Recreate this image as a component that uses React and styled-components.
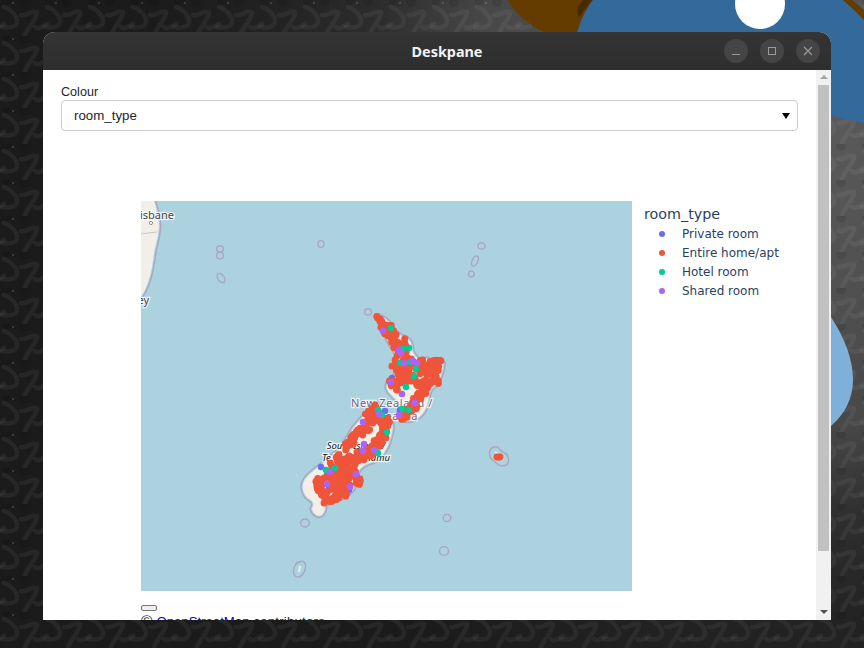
import React from 'react'
import styled, { createGlobalStyle } from 'styled-components'

const GlobalStyle = createGlobalStyle`
  html, body { margin: 0; padding: 0; background: #1c1c1c; }
  body { font-family: "Liberation Sans", Arial, sans-serif; }
`

const Desktop = styled.div`
  position: relative;
  box-sizing: border-box;
  width: 864px;
  height: 648px;
  padding: 32px 33px 28px 43px;
  overflow: hidden;
`
const Wallpaper = styled.svg`
  position: absolute;
  left: 0;
  top: 0;
`
const Window = styled.div`
  position: relative;
  display: flex;
  flex-direction: column;
  height: 100%;
  border-radius: 12px 12px 0 0;
  overflow: hidden;
  background: #fff;
`
const TitleBar = styled.div`
  display: grid;
  grid-template-columns: 1fr auto 1fr;
  align-items: center;
  flex: none;
  height: 38px;
  padding-left: 20px;
  background: linear-gradient(#343434, #2e2e2e);
`
const Title = styled.div`
  font-family: "Noto Sans", "Open Sans", sans-serif;
  font-weight: 700;
  font-size: 14.4px;
  color: #f2f2f2;
`
const Controls = styled.div`
  display: flex;
  justify-content: flex-end;
  gap: 12px;
  margin-right: 11px;
`
const ControlButton = styled.div`
  display: flex;
  align-items: center;
  justify-content: center;
  width: 24px;
  height: 24px;
  border-radius: 50%;
  background: #454545;
`
const Body = styled.div`
  display: flex;
  flex: 1;
  min-height: 0;
`
const Content = styled.div`
  flex: 1;
  min-width: 0;
  padding: 13px 18px 0;
  overflow: hidden;
`
const Label = styled.label`
  display: block;
  padding-top: 1px;
  font-size: 12.6px;
  line-height: 16px;
  color: #212529;
`
const SelectWrap = styled.div`
  position: relative;
  height: 31px;
`
const Select = styled.select`
  appearance: none;
  box-sizing: border-box;
  display: block;
  width: 100%;
  height: 100%;
  padding: 0 12px;
  border: 1px solid #cbcbcb;
  border-radius: 4px;
  background: #fff;
  font-family: "Liberation Sans", Arial, sans-serif;
  font-size: 13.3px;
  color: #212529;
`
const SelectArrow = styled.span`
  position: absolute;
  right: 8px;
  top: 13px;
  width: 0;
  height: 0;
  border-left: 4px solid transparent;
  border-right: 4px solid transparent;
  border-top: 6px solid #000;
`
const PlotRow = styled.div`
  display: flex;
  margin-top: 70px;
  padding-left: 80px;
`
const MapSvg = styled.svg`
  display: block;
  flex: none;
`
const Legend = styled.div`
  margin-left: 12px;
  padding-top: 4px;
  font-family: "DejaVu Sans", Verdana, sans-serif;
  color: #2a3f5f;
`
const LegendTitle = styled.div`
  font-size: 14.3px;
  line-height: 18px;
  margin-bottom: 1px;
`
const LegendRow = styled.div`
  display: flex;
  align-items: center;
  height: 19px;
  font-size: 12px;
  white-space: nowrap;
`
const LegendDot = styled.span`
  width: 6px;
  height: 6px;
  margin: 0 17px 0 15px;
  border-radius: 50%;
  background: ${p => p.$color};
`
const MapFoot = styled.div`
  margin-top: 14px;
  margin-left: 80px;
  font-size: 13.2px;
  line-height: 16px;
  color: #212529;
  white-space: nowrap;
`
const ResetButton = styled.button`
  display: block;
  box-sizing: border-box;
  width: 16px;
  height: 6px;
  padding: 0;
  margin-bottom: 2px;
  border: 1px solid #767676;
  border-radius: 2px;
  background: #efefef;
`
const Copyright = styled.span`
  font-size: 15.5px;
  line-height: 1;
  margin-right: 4px;
`
const OsmLink = styled.a`
  color: #0000ee;
  text-decoration: underline;
`
const Contributors = styled.span`
  letter-spacing: 0.25px;
`
const Scrollbar = styled.div`
  display: flex;
  flex-direction: column;
  align-items: center;
  flex: none;
  width: 15px;
  background: #f1f1f1;
`
const ScrollArrow = styled.div`
  flex: none;
  width: 0;
  height: 0;
  border-left: 4px solid transparent;
  border-right: 4px solid transparent;
  ${p => p.$down
    ? `border-top: 4px solid #505050; margin: auto 0 6px;`
    : `border-bottom: 4px solid #a3a3a3; margin-top: 5px;`}
`
const ScrollThumb = styled.div`
  flex: none;
  width: 11px;
  height: 466px;
  margin-top: 6px;
  background: #c1c1c1;
`

// smoothing for a closed shape, curves through the midpoints
const smooth = pts => {
  const mid = (a, b) => [(a[0] + b[0]) / 2, (a[1] + b[1]) / 2]
  const start = mid(pts[pts.length - 1], pts[0])
  let d = `M${start[0]} ${start[1]}`
  pts.forEach((p, i) => {
    const m = mid(p, pts[(i + 1) % pts.length])
    d += `Q${p[0]} ${p[1]} ${m[0]} ${m[1]}`
  })
  return d + 'Z'
}

const northIsland = [
  [376, 313], [382, 315], [390, 320], [398, 333], [409, 337], [413, 342], [414, 353], [422, 360],
  [427, 356], [432, 360], [437, 358], [445, 360], [445, 368], [442, 378], [437, 387], [431, 391],
  [430, 403], [424, 416], [414, 422], [404, 423], [399, 417], [403, 409], [394, 400], [385, 391],
  [385, 382], [395, 374], [396, 356], [389, 346], [382, 333], [377, 322],
]
const southIsland = [
  [366, 411], [376, 409], [389, 414], [395, 424], [393, 436], [389, 448], [381, 461], [365, 466],
  [358, 474], [358, 485], [351, 495], [337, 503], [326, 505], [327, 510], [323, 517], [316, 518],
  [309, 510], [313, 503], [305, 499], [300, 488], [303, 478], [315, 467], [329, 457], [343, 443],
  [351, 427],
]
const australia = [
  [154, 195], [158, 208], [161, 222], [160, 236], [156, 250], [154, 268], [149, 286], [142, 299],
  [130, 312], [130, 195],
]
const islands = [
  { cx: 368, cy: 312, rx: 3.6, ry: 3.2 },
  { cx: 321, cy: 244, rx: 3, ry: 3.4 },
  { cx: 220, cy: 249, rx: 3.4, ry: 3.2 },
  { cx: 220, cy: 255.5, rx: 3.4, ry: 3.4 },
  { cx: 221, cy: 278, rx: 3.2, ry: 5.2, rotate: -35 },
  { cx: 481.5, cy: 246, rx: 3.6, ry: 3.2 },
  { cx: 475, cy: 261, rx: 2.8, ry: 5.4, rotate: 25 },
  { cx: 471.3, cy: 274, rx: 2.9, ry: 2.9 },
  { cx: 305, cy: 523, rx: 4.4, ry: 4 },
  { cx: 447, cy: 518, rx: 3.8, ry: 3.6 },
  { cx: 444, cy: 551, rx: 4.6, ry: 4.4 },
]
const chatham = [[490, 448], [498, 446], [500, 451], [508, 454], [509, 464], [501, 467], [495, 462], [489, 457]]
const auckland = [[297, 562], [305, 561], [306, 568], [303, 575], [297, 578], [293, 574], [294, 567]]

// [x1, y1, x2, y2, how many, spread]
const redBands = [
  [378, 317, 385, 327, 12, 1.5], [385, 327, 394, 340, 30, 5], [394, 340, 402, 353, 30, 5],
  [406, 339, 405, 352, 8, 1.5], [402, 354, 432, 366, 16, 5], [396, 362, 422, 372, 18, 6],
  [420, 364, 438, 380, 16, 5], [433, 361, 441, 362, 7, 1.5], [437, 365, 439, 370, 3, 1],
  [389, 382, 399, 388, 14, 2.5], [398, 368, 404, 382, 14, 3.5], [408, 376, 420, 386, 12, 3],
  [418, 382, 436, 384, 12, 3], [428, 384, 420, 398, 22, 3.5], [420, 396, 412, 410, 26, 4],
  [413, 405, 402, 418, 18, 3], [375, 406, 372, 416, 8, 2], [370, 414, 388, 424, 24, 5],
  [386, 424, 381, 437, 14, 4], [370, 420, 360, 434, 24, 4], [360, 430, 345, 447, 28, 3],
  [382, 436, 372, 452, 22, 4], [372, 450, 356, 460, 24, 5], [356, 456, 338, 468, 30, 6],
  [340, 460, 348, 478, 30, 6], [350, 470, 358, 484, 18, 3.5], [348, 484, 342, 494, 18, 4],
  [344, 494, 330, 500, 20, 3], [330, 474, 318, 484, 18, 3], [318, 480, 320, 492, 16, 3],
  [322, 490, 326, 498, 12, 3], [334, 484, 332, 490, 8, 4], [324, 503, 323, 503, 1, 0],
  [497, 457, 500, 457, 3, 0], [339, 455, 337, 457, 3, 1], [332, 467, 330, 463, 3, 1],
  [342, 476, 336, 488, 14, 4],
]

const bluePts = [
  [321, 467], [385, 411], [358, 455], [318, 485], [342, 493], [353, 468], [327, 475], [405, 365],
  [392, 378], [400, 410], [380, 417], [336, 497], [412, 403], [349, 490], [329, 488],
]
const greenPts = [
  [391, 328], [403, 349], [409, 348], [400, 363], [410, 362], [416, 369], [414, 376], [406, 387],
  [402, 409], [409, 410], [378, 410], [382, 415], [387, 432], [378, 453], [326, 470], [335, 468],
]
const purplePts = [
  [383, 331], [399, 350], [401, 353], [404, 363], [413, 361], [417, 363], [391, 382], [402, 394],
  [415, 403], [379, 414], [399, 415], [363, 422], [364, 444], [363, 451], [374, 450], [330, 472],
  [356, 474], [350, 487], [327, 484],
]

const makeDots = () => {
  // small seeded generator so that the picture stays the same on each load
  let seed = 20231
  const rand = () => {
    seed = (seed * 1664525 + 1013904223) % 4294967296
    return seed / 4294967296
  }
  const dots = []
  redBands.forEach(([x1, y1, x2, y2, n, spread]) => {
    for (let i = 0; i < n; i++) {
      const t = n === 1 ? 0 : i / (n - 1)
      dots.push([
        x1 + (x2 - x1) * t + (rand() - 0.5) * 2 * spread,
        y1 + (y2 - y1) * t + (rand() - 0.5) * 2 * spread,
      ])
    }
  })
  return dots
}
const redPts = makeDots()

const LEGEND = [
  { name: 'Private room', color: '#636efa' },
  { name: 'Entire home/apt', color: '#ef553b' },
  { name: 'Hotel room', color: '#00cc96' },
  { name: 'Shared room', color: '#ab63fa' },
]

const WATER = '#acd2df'
const LAND = '#f2efe9'
const COAST = '#aaa6bf'

const Dots = ({ pts, color, r }) => (
  <g fill={color}>
    {pts.map((p, i) => <circle key={i} cx={p[0].toFixed(1)} cy={p[1].toFixed(1)} r={r} />)}
  </g>
)

// land with a strip of water inside of the coast line, as the map tiles have it
const Coast = ({ id, pts }) => {
  const d = smooth(pts)
  return (
    <g>
      <clipPath id={id}><path d={d} /></clipPath>
      <path d={d} fill={LAND} stroke={WATER} strokeWidth="3.5" clipPath={`url(#${id})`} />
      <path d={d} fill="none" stroke={COAST} strokeWidth="1.4" />
    </g>
  )
}

const MapLabel = ({ x, y, size, fill, italic, spacing, anchor = 'middle', children }) => (
  <text
    x={x}
    y={y}
    textAnchor={anchor}
    fontFamily='"Noto Sans", "DejaVu Sans", sans-serif'
    fontSize={size}
    fontStyle={italic ? 'italic' : 'normal'}
    letterSpacing={spacing}
    fill={fill}
    stroke="#fff"
    strokeOpacity="0.75"
    strokeWidth="2.5"
    paintOrder="stroke"
  >
    {children}
  </text>
)

const NzMap = () => (
  <MapSvg width="491" height="390" viewBox="141 201 491 390">
    <rect x="141" y="201" width="491" height="390" fill={WATER} />

    <Coast id="coast-au" pts={australia} />
    <path d="M141 234 L148 233 L157 232" fill="none" stroke="#cfc0cc" strokeWidth="1" />
    <circle cx="151" cy="223" r="1.6" fill="#fff" stroke="#777" strokeWidth="0.8" />
    <MapLabel x="174" y="219" size="11" fill="#444" anchor="end">Brisbane</MapLabel>
    <MapLabel x="149" y="304" size="11" fill="#444" anchor="end">Sydney</MapLabel>

    {islands.map((s, i) => (
      <ellipse
        key={i}
        cx={s.cx}
        cy={s.cy}
        rx={s.rx}
        ry={s.ry}
        transform={s.rotate ? `rotate(${s.rotate} ${s.cx} ${s.cy})` : undefined}
        fill="none"
        stroke={COAST}
        strokeWidth="1.4"
      />
    ))}
    <path d={smooth(chatham)} fill="none" stroke={COAST} strokeWidth="1.4" />
    <path d="M495 452 L501 455 L503 460" fill="none" stroke={LAND} strokeWidth="1.6" />
    <path d={smooth(auckland)} fill="none" stroke={COAST} strokeWidth="1.4" />
    <path d="M300 566 L299 572" fill="none" stroke={LAND} strokeWidth="1.8" />

    <Coast id="coast-north" pts={northIsland} />
    <Coast id="coast-south" pts={southIsland} />

    <MapLabel x="392" y="407" size="11" fill="#75657f" spacing="0.6">New Zealand /</MapLabel>
    <MapLabel x="392" y="420" size="11" fill="#75657f" spacing="0.6">Aotearoa</MapLabel>
    <MapLabel x="356" y="449" size="9.5" fill="#111" italic>South Island /</MapLabel>
    <MapLabel x="356" y="461" size="9.5" fill="#111" italic>Te Waipounamu</MapLabel>

    <Dots pts={bluePts} color="#636efa" r="3.2" />
    <Dots pts={redPts} color="#ef553b" r="3.4" />
    <Dots pts={greenPts} color="#00cc96" r="3.2" />
    <Dots pts={purplePts} color="#ab63fa" r="3.3" />
  </MapSvg>
)

const App = () => (
  <Desktop>
    <GlobalStyle />
    <Wallpaper width="864" height="648" viewBox="0 0 864 648">
      <defs>
        <radialGradient id="shade" gradientUnits="userSpaceOnUse" cx="800" cy="100" r="650">
          <stop offset="0" stopColor="#5c5c5c" />
          <stop offset="0.5" stopColor="#484848" />
          <stop offset="0.65" stopColor="#2e2e2e" />
          <stop offset="0.8" stopColor="#232323" />
          <stop offset="1" stopColor="#1b1b1b" />
        </radialGradient>
        <pattern id="squiggle" width="43" height="36" patternUnits="userSpaceOnUse">
          <g fill="none" stroke="#fff" strokeOpacity="0.05" strokeWidth="4.4" strokeLinecap="round" strokeLinejoin="round">
            <path d="M4 7 C11 9 18 17 17 22 C16 28 8 28 2 27" />
            <path d="M21 15 C26 17 30 10 37 12 C38 18 29 25 25 35" />
            <path d="M35 27 C38 30 41 27 47 24" />
            <path d="M-8 27 C-5 30 -2 27 4 24" />
          </g>
          <circle cx="24" cy="2" r="5" fill="#000" fillOpacity="0.1" />
          <circle cx="6" cy="1" r="4" fill="#000" fillOpacity="0.1" />
          <circle cx="13" cy="3" r="0.9" fill="#fff" fillOpacity="0.2" />
        </pattern>
      </defs>
      <rect width="864" height="648" fill="url(#shade)" />
      <rect width="864" height="648" fill="url(#squiggle)" />
      <path d="M508 0 C515 14 530 25 543 32 L600 40 L640 0 Z" fill="#643c00" />
      <path d="M840 0 L852 0 L864 10 L864 22 Z" fill="#643c00" />
      <path d="M583 0 C577 6 576 12 579 17 L592 0 Z" fill="#472b00" />
      <path d="M593 0 C585 10 580 22 576 36 L640 70 C700 90 780 105 864 123 L864 20 C856 12 850 6 843 0 Z" fill="#33699b" />
      <circle cx="760" cy="4" r="25" fill="#fff" />
      <path d="M831 317 C845 338 853 360 853 380 C853 398 845 414 831 426 Z" fill="#7fb0d9" />
    </Wallpaper>
    <Window>
      <TitleBar>
        <span />
        <Title>Deskpane</Title>
        <Controls>
          <ControlButton>
            <svg width="10" height="10" viewBox="0 0 10 10"><path d="M1 8.5 H9" stroke="#9a9a9a" strokeWidth="1" /></svg>
          </ControlButton>
          <ControlButton>
            <svg width="10" height="10" viewBox="0 0 10 10"><rect x="1.5" y="1.5" width="7" height="7" fill="none" stroke="#9a9a9a" strokeWidth="1" /></svg>
          </ControlButton>
          <ControlButton>
            <svg width="10" height="10" viewBox="0 0 10 10"><path d="M1 1 L9 9 M9 1 L1 9" stroke="#9a9a9a" strokeWidth="1.1" /></svg>
          </ControlButton>
        </Controls>
      </TitleBar>
      <Body>
        <Content>
          <Label>Colour</Label>
          <SelectWrap>
            <Select defaultValue="room_type">
              <option>room_type</option>
            </Select>
            <SelectArrow />
          </SelectWrap>
          <PlotRow>
            <NzMap />
            <Legend>
              <LegendTitle>room_type</LegendTitle>
              {LEGEND.map(item => (
                <LegendRow key={item.name}>
                  <LegendDot $color={item.color} />
                  {item.name}
                </LegendRow>
              ))}
            </Legend>
          </PlotRow>
          <MapFoot>
            <ResetButton />
            <Copyright>©</Copyright>
            <OsmLink href="#">OpenStreetMap</OsmLink> <Contributors>contributors</Contributors>
          </MapFoot>
        </Content>
        <Scrollbar>
          <ScrollArrow />
          <ScrollThumb />
          <ScrollArrow $down />
        </Scrollbar>
      </Body>
    </Window>
  </Desktop>
)

export default App
